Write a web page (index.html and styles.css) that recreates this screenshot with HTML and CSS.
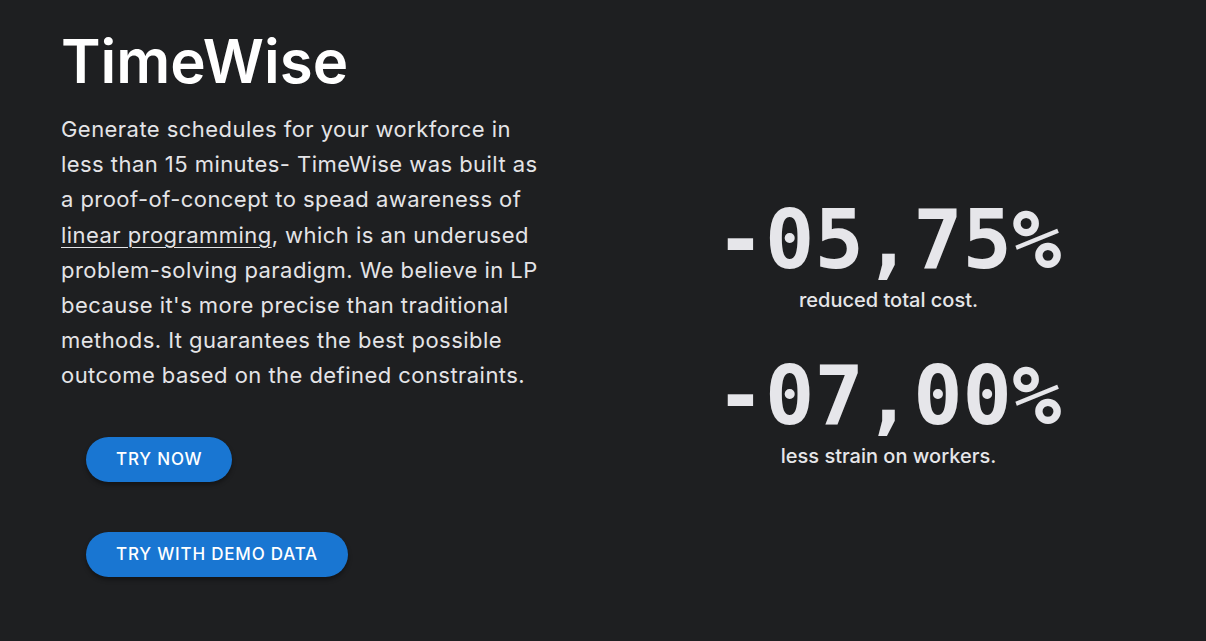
FILE: index.html
```html
<!DOCTYPE html>
<html lang="en">
<head>
<meta charset="utf-8">
<title>TimeWise</title>
<link rel="stylesheet" href="styles.css">
</head>
<body>
<main class="hero">
  <section class="intro">
    <h1 class="title">TimeWise</h1>
    <p class="lead">Generate schedules for your workforce in less than 15 minutes- TimeWise was built as a proof-of-concept to spead awareness of <a class="link" href="#">linear programming</a>, which is an underused problem-solving paradigm. We believe in LP because it's more precise than traditional methods. It guarantees the best possible outcome based on the defined constraints.</p>
    <div class="actions">
      <button class="btn">Try now</button>
      <button class="btn">Try with demo data</button>
    </div>
  </section>
  <section class="stats">
    <div class="stat">
      <div class="stat-value">-05,75%</div>
      <div class="stat-label">reduced total cost.</div>
    </div>
    <div class="stat">
      <div class="stat-value">-07,00%</div>
      <div class="stat-label">less strain on workers.</div>
    </div>
  </section>
</main>
</body>
</html>
```

FILE: styles.css
```css
html, body {
  margin: 0;
  padding: 0;
  background: #1e1f21;
  height: 100%;
}
body {
  font-family: Inter, "Noto Sans", sans-serif;
  color: #e6e6e9;
}
.hero {
  display: grid;
  grid-template-columns: 540px 1fr;
  padding: 0 0 0 61px;
}
.intro {
  padding-top: 25px;
}
.title {
  margin: 0;
  font-size: 60px;
  font-weight: 600;
  line-height: 72px;
  color: #ffffff;
}
.lead {
  margin: 15px 0 0;
  width: 495px;
  font-size: 22px;
  line-height: 35.2px;
  letter-spacing: 0.45px;
  color: #e4e4e7;
}
.link {
  color: inherit;
  text-decoration: underline;
  text-underline-offset: 4px;
  text-decoration-thickness: 1px;
}
.actions {
  display: flex;
  flex-direction: column;
  align-items: flex-start;
  gap: 50px;
  margin-top: 43px;
  padding-left: 25px;
}
.btn {
  font-family: Inter, "Noto Sans", sans-serif;
  font-size: 17px;
  font-weight: 500;
  text-transform: uppercase;
  letter-spacing: 0.8px;
  color: #ffffff;
  background: #1976d2;
  border: none;
  border-radius: 23px;
  height: 45px;
  padding: 0 30px;
  box-shadow: 0 3px 4px rgba(0, 0, 0, 0.35);
}
.stats {
  display: flex;
  flex-direction: column;
  align-items: center;
  gap: 38px;
  padding-top: 194px;
  padding-right: 30px;
}
.stat {
  display: flex;
  flex-direction: column;
  align-items: center;
}
.stat-value {
  font-family: "DejaVu Sans Mono", monospace;
  font-size: 82px;
  font-weight: 700;
  line-height: 92px;
  color: #e6e6ea;
}
.stat-label {
  font-size: 20px;
  font-weight: 500;
  line-height: 24px;
  margin-top: 2px;
  color: #e6e6e9;
}
```
